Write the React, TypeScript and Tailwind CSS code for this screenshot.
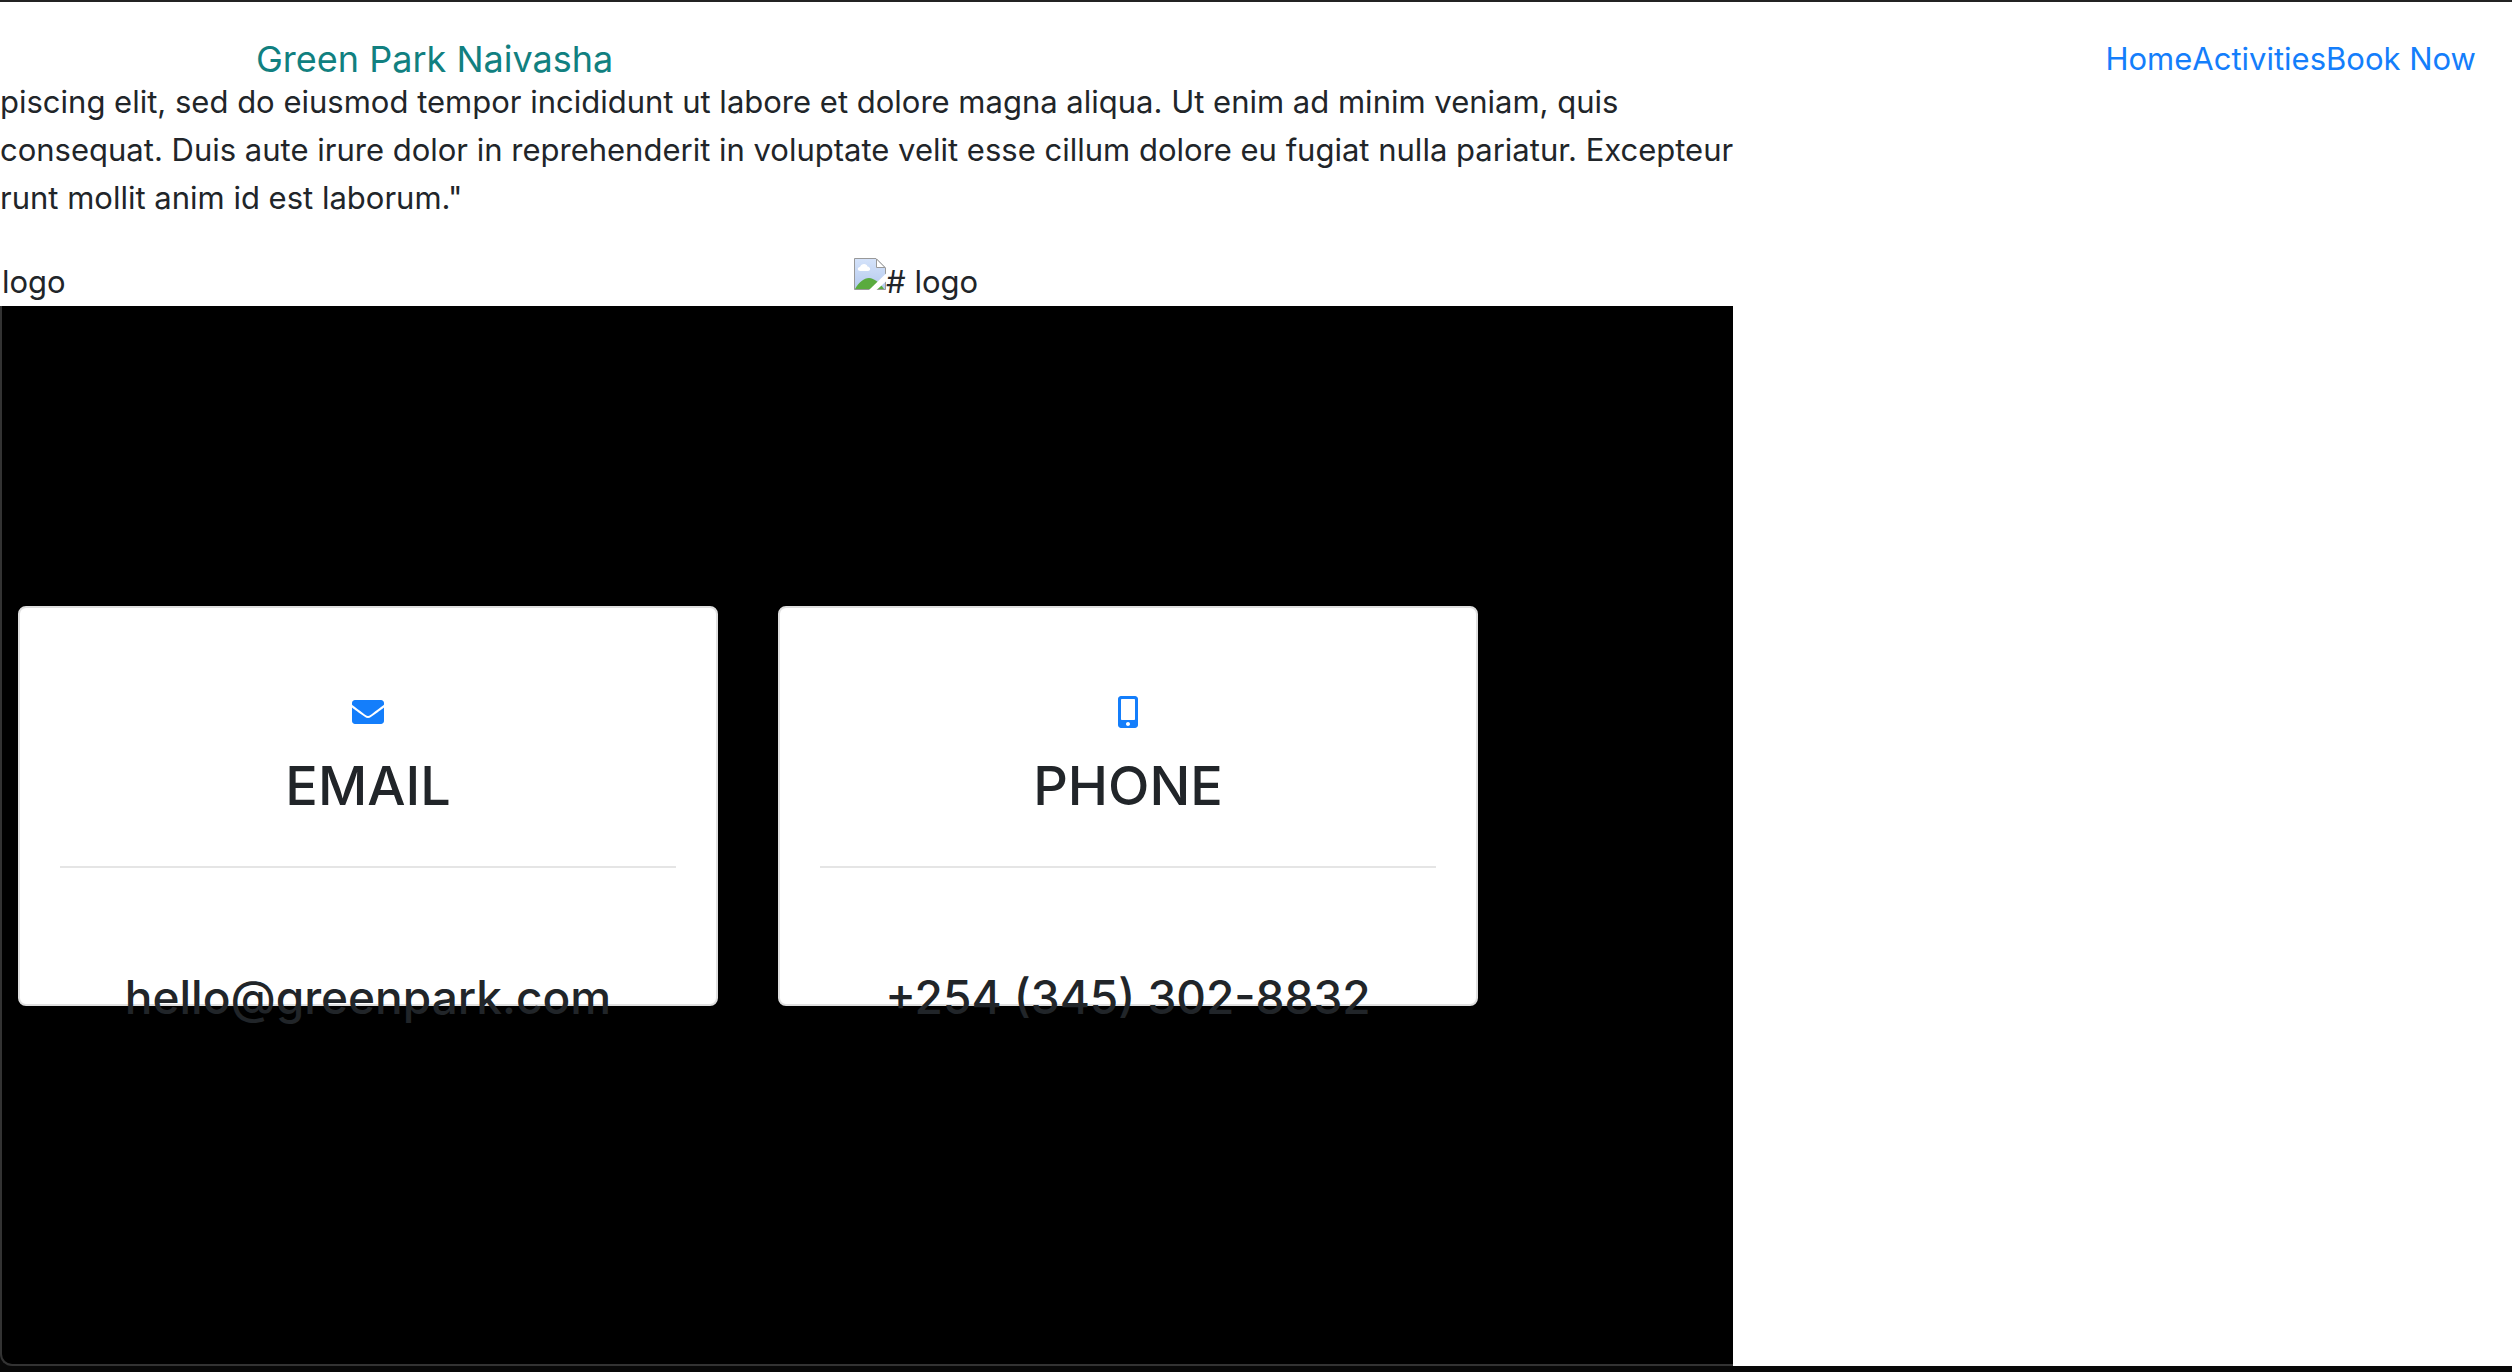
import type { ReactNode } from "react";
import { FaEnvelope, FaMobileAlt } from "react-icons/fa";

const links = ["Home", "Activities", "Book Now"];

function BrokenImage() {
  return (
    <svg className="size-8 shrink-0" viewBox="0 0 32 32" aria-hidden="true">
      <defs>
        <linearGradient id="sky" x1="0" y1="0" x2="0" y2="1">
          <stop offset="0" stopColor="#d5e3fa" />
          <stop offset="1" stopColor="#b4c9ee" />
        </linearGradient>
      </defs>
      <path d="M.5.5H22L31.5 10V31.5H.5Z" fill="url(#sky)" />
      <path d="M1 31C5 24 10 20 15 20S26 25 30 31Z" fill="#5aab3f" />
      <path d="M6.5 13C3 13 3 9 6 9C7 5 13 5 13.500 8.500C17 9 17 13 14 13Z" fill="#fff" />
      <path d="M.5 31.500V.5H22L31.500 10V31.500Z" fill="none" stroke="#999" />
      <path d="M22.500 1V9.500H31Z" fill="#fff" stroke="#999" />
      <path d="M32 15.500V23.500L22.500 32H15Z" fill="#fff" />
    </svg>
  );
}

function ContactCard({ icon, title, value }: { icon: ReactNode; title: string; value: string }) {
  return (
    <article className="h-[400px] w-[700px] rounded-lg border-2 border-[#dfdfdf] bg-white px-10 pt-20 text-center font-medium">
      <div className="flex h-12 items-center justify-center text-[32px] text-[#147efb]">{icon}</div>
      <h2 className="pt-4 text-[54px] leading-[68px]">{title}</h2>
      <hr className="mt-[46px] border-t-2 border-[#e5e5e5]" />
      <h3 className="pt-[100px] text-[46px] leading-[58px] whitespace-nowrap">{value}</h3>
    </article>
  );
}

export default function App() {
  return (
    <div className="flex min-h-screen flex-col overflow-hidden border-t-2 border-[#232323] bg-[#080808] font-['Inter',sans-serif] text-[#212529]">
      <div className="flex grow flex-col bg-white">
        <header className="flex h-[76px] items-end justify-between pr-9 pl-64 leading-[38px]">
          <h1 className="text-[36px] text-[#118080]">Green Park Naivasha</h1>
          <nav className="flex text-[31px] text-[#147efb]">
            {links.map((label) => (
              <a key={label} href="#">
                {label}
              </a>
            ))}
          </nav>
        </header>
        <p className="text-[31px] leading-[48px] whitespace-nowrap">
          piscing elit, sed do eiusmod tempor incididunt ut labore et dolore magna aliqua. Ut enim ad minim veniam, quis
          <br />
          consequat. Duis aute irure dolor in reprehenderit in voluptate velit esse cillum dolore eu fugiat nulla pariatur. Excepteur
          <br />
          runt mollit anim id est laborum."
        </p>
        <div className="grid grid-cols-[34%_1fr] pt-9 text-[31px] leading-[48px]">
          <span className="pl-0.5">logo</span>
          <span className="flex items-start">
            <BrokenImage />
            <span># logo</span>
          </span>
        </div>
        <div className="flex grow bg-[linear-gradient(#080808,#080808)] bg-[length:16px_16px] bg-bottom-left bg-no-repeat">
          <main className="flex w-[69%] items-start gap-[60px] rounded-bl-xl border-b-2 border-l-2 border-[#333] bg-black pt-[300px] pl-4">
            <ContactCard icon={<FaEnvelope />} title="EMAIL" value="hello@greenpark.com" />
            <ContactCard icon={<FaMobileAlt />} title="PHONE" value="+254 (345) 302-8832" />
          </main>
        </div>
      </div>
      <footer className="h-1.5 bg-[#080808]" />
    </div>
  );
}
